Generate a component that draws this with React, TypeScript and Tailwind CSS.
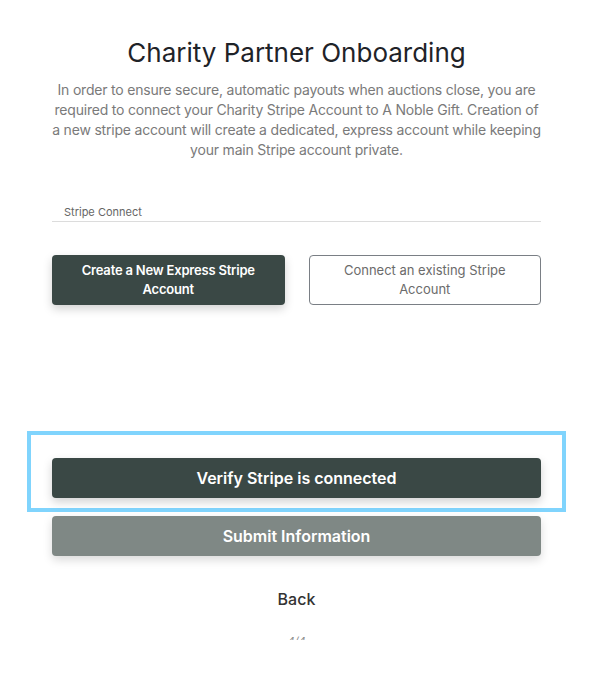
export default function App() {
  return (
    <div className="min-h-[686px] bg-white font-['Inter',sans-serif]">
      <div className="ml-[52px] w-[489px] pt-[37px]">
        <h1 className="text-center text-[26px] leading-[32px] font-normal text-[#1f2328]">
          Charity Partner Onboarding
        </h1>
        <p className="mt-[11px] text-center text-[14px] leading-[20px] tracking-[-0.2px] text-[#7a7a7a]">
          In order to ensure secure, automatic payouts when auctions close, you are
          required to connect your Charity Stripe Account to A Noble Gift. Creation of
          a new stripe account will create a dedicated, express account while keeping
          your main Stripe account private.
        </p>

        <div className="mt-[45px] border-b border-[#dcdcdc] pb-[2px] pl-[12px] text-[11px] leading-[14px] text-[#666]">
          Stripe Connect
        </div>

        <div className="mt-[33px] grid grid-cols-2 gap-[24px]">
          <button className="h-[50px] rounded-[4px] bg-[#3a4845] px-4 text-[13px] leading-[19px] font-semibold tracking-[-0.2px] text-white shadow-[0_4px_10px_rgba(0,0,0,0.18)]">
            Create a New Express Stripe Account
          </button>
          <button className="h-[50px] rounded-[4px] border border-[#7a7f85] bg-white px-6 text-[13px] leading-[19px] text-[#6b6b6b]">
            Connect an existing Stripe Account
          </button>
        </div>

        <div className="-mx-[25px] mt-[126px] border-[4px] border-[#80d4fd] px-[21px] pt-[23px] pb-[10px]">
          <button className="h-[40px] w-full rounded-[4px] bg-[#3a4845] text-[16px] font-semibold text-white shadow-[0_4px_10px_rgba(0,0,0,0.18)]">
            Verify Stripe is connected
          </button>
        </div>

        <button className="mt-[4px] h-[40px] w-full rounded-[4px] bg-[#7f8885] text-[16px] font-semibold text-white shadow-[0_4px_10px_rgba(0,0,0,0.15)]">
          Submit Information
        </button>

        <div className="mt-[33px] text-center text-[16px] leading-[20px] font-medium text-[#333]">
          Back
        </div>

        <div className="mx-auto mt-[25px] h-[6px] w-[20px] overflow-hidden text-center text-[11px] leading-[14px] italic text-[#8a8a8a]">
          4/4
        </div>
      </div>
    </div>
  );
}
